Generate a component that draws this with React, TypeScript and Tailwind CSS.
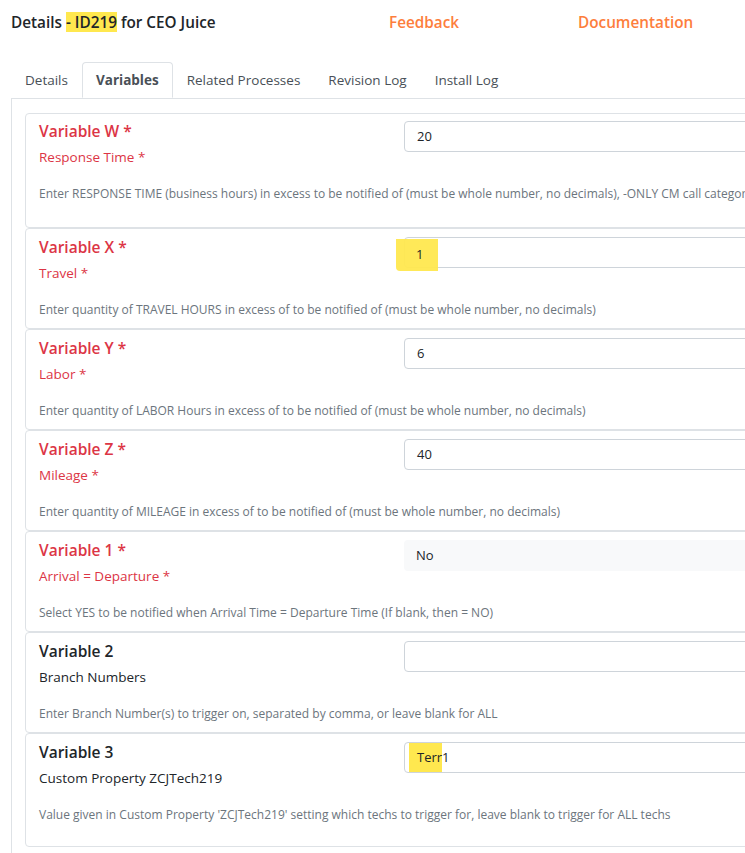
import React from "react";

type Field = {
  label: string;
  sub: string;
  desc: string;
  value: string;
  required: boolean;
  kind?: "input" | "select";
  highlight?: "box" | "text";
  pad?: string;
};

const fields: Field[] = [
  {
    label: "Variable W",
    sub: "Response Time",
    desc: "Enter RESPONSE TIME (business hours) in excess to be notified of (must be whole number, no decimals), -ONLY CM call category calls will trigger this alert",
    value: "20",
    required: true,
    pad: "pt-[7px] pb-[24px]",
  },
  {
    label: "Variable X",
    sub: "Travel",
    desc: "Enter quantity of TRAVEL HOURS in excess of to be notified of (must be whole number, no decimals)",
    value: "1",
    required: true,
    highlight: "box",
  },
  {
    label: "Variable Y",
    sub: "Labor",
    desc: "Enter quantity of LABOR Hours in excess of to be notified of (must be whole number, no decimals)",
    value: "6",
    required: true,
  },
  {
    label: "Variable Z",
    sub: "Mileage",
    desc: "Enter quantity of MILEAGE in excess of to be notified of (must be whole number, no decimals)",
    value: "40",
    required: true,
  },
  {
    label: "Variable 1",
    sub: "Arrival = Departure",
    desc: "Select YES to be notified when Arrival Time = Departure Time (If blank, then = NO)",
    value: "No",
    required: true,
    kind: "select",
  },
  {
    label: "Variable 2",
    sub: "Branch Numbers",
    desc: "Enter Branch Number(s) to trigger on, separated by comma, or leave blank for ALL",
    value: "",
    required: false,
  },
  {
    label: "Variable 3",
    sub: "Custom Property ZCJTech219",
    desc: "Value given in Custom Property 'ZCJTech219' setting which techs to trigger for, leave blank to trigger for ALL techs",
    value: "Terr1",
    required: false,
    highlight: "text",
    pad: "pt-2 pb-[22px]",
  },
];

const tabs = ["Details", "Variables", "Related Processes", "Revision Log", "Install Log"];

function FieldCard({ f }: { f: Field }) {
  const color = f.required ? "text-[#dc3545]" : "text-[#212529]";
  return (
    <div className={`border border-[#dee2e6] rounded px-[13px] ${f.pad ?? "pt-2 pb-[9px]"}`}>
      <div className="flex">
        <div className="w-[365px] shrink-0">
          <div className={`text-[15.5px] leading-5 font-semibold ${color}`}>
            {f.label}
            {f.required && " *"}
          </div>
          <div className={`text-[13.5px] leading-5 mt-[6px] ${color}`}>
            {f.sub}
            {f.required && " *"}
          </div>
        </div>
        <div className="relative w-[700px]">
          {f.kind === "select" ? (
            <div className="h-[31px] rounded bg-[#f8f9fa] flex items-center px-3 text-[13px] text-[#212529]">
              {f.value}
            </div>
          ) : (
            <div className="h-[31px] rounded border border-[#ced4da] bg-white flex items-center px-3 text-[13px] text-[#212529]">
              {f.highlight === "text" ? (
                <>
                  <span className="bg-[#ffe84f] -ml-2 pl-2 leading-[29px]">Terr</span>
                  <span>1</span>
                </>
              ) : f.highlight === "box" ? null : (
                f.value
              )}
            </div>
          )}
          {f.highlight === "box" && (
            <div className="absolute left-[-8px] top-[2px] w-[42px] h-[32px] bg-[#ffe84f]/95 flex items-center pl-[20px] text-[13px] text-[#212529] rounded-bl-sm">
              {f.value}
            </div>
          )}
        </div>
      </div>
      <div className="text-[12px] leading-[18px] text-[#6c757d] mt-[18px] whitespace-nowrap">{f.desc}</div>
    </div>
  );
}

export default function App() {
  return (
    <div
      className="w-[745px] h-[853px] overflow-hidden bg-white text-[#212529]"
      style={{ fontFamily: '"Open Sans", "Noto Sans", sans-serif' }}
    >
      <div className="w-[1200px]">
        <div className="flex items-center h-[44px] pl-[11px] text-[15.3px] font-semibold">
          <div className="w-[378px]">
            Details <span className="bg-[#ffe84f]">- ID219</span> for CEO Juice
          </div>
          <div className="w-[189px] text-[#fd7e3c]">Feedback</div>
          <div className="text-[#fd7e3c]">Documentation</div>
        </div>

        <div className="ml-[11px] mt-[18px] flex border-b border-[#dee2e6]">
          {tabs.map((t) => (
            <div
              key={t}
              className={
                t === "Variables"
                  ? "px-[13px] h-[36px] -mb-px flex items-center text-[13.5px] font-bold text-[#495057] border border-[#dee2e6] border-b-white rounded-t bg-white"
                  : "px-[14px] h-[36px] flex items-center text-[13.5px] text-[#495057]"
              }
            >
              {t}
            </div>
          ))}
        </div>

        <div className="ml-[11px] border-l border-[#dee2e6] pl-[13px] pt-[14px] pb-4">
          <div className="flex flex-col">
            {fields.map((f) => (
              <FieldCard key={f.label} f={f} />
            ))}
          </div>
        </div>
      </div>
    </div>
  );
}
